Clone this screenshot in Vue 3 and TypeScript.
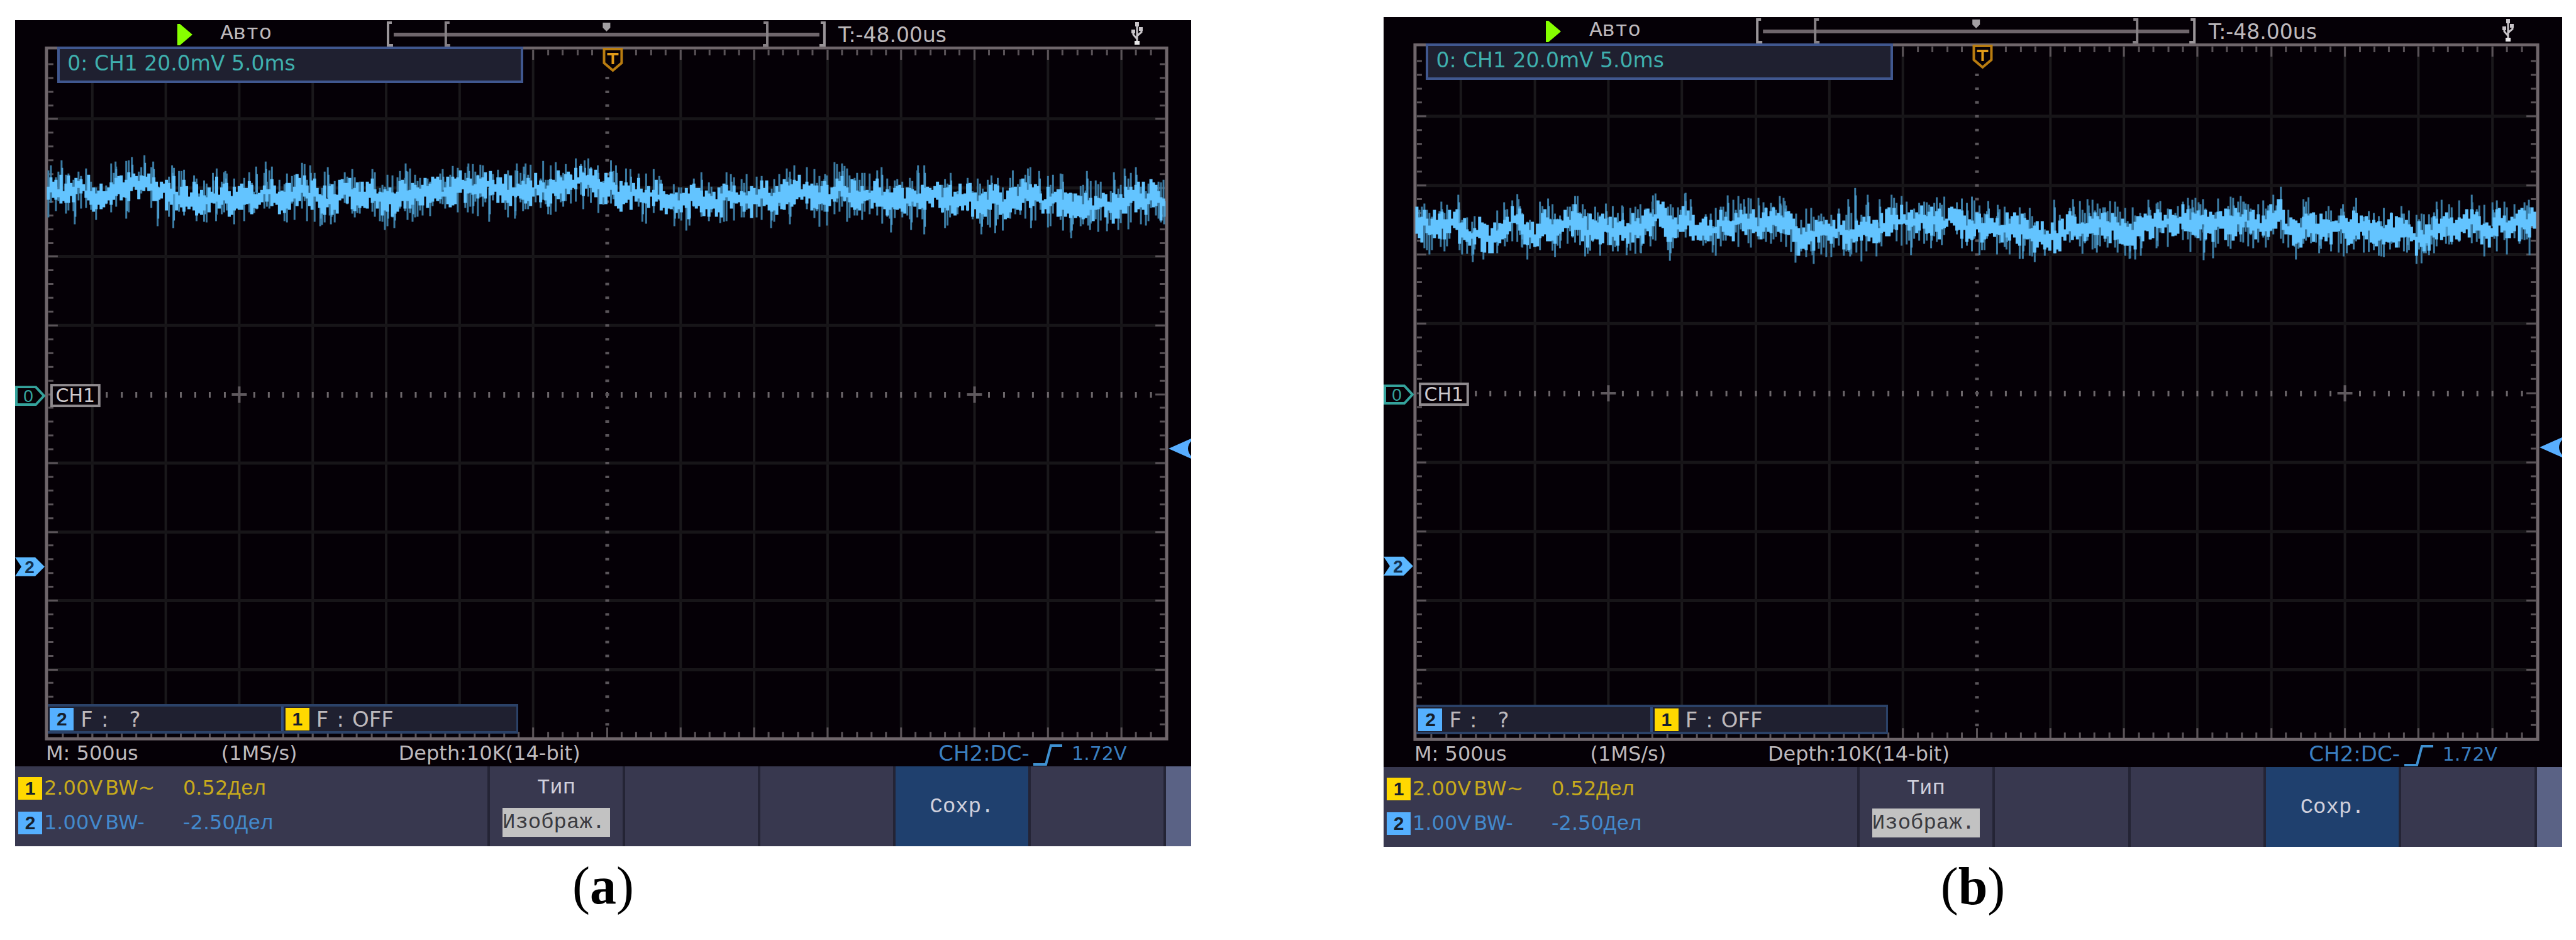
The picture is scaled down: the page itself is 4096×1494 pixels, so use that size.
<script setup lang="ts">
interface Segment {
  origin: number
  density: number
  mean: [number, number][]
  spikes: [number, number][]
}

interface Panel {
  id: string
  w: number
  h: number
  top: number
  trigger: number
  seed: number
  segments: Segment[]
}

const panels: Panel[] = [
  {
    id: 'a', w: 1873, h: 1105, top: 74, trigger: 640, seed: 11,
    segments: [
      {
        origin: -24, density: 1.568,
        mean: [[120, 930], [190, 900], [260, 915], [320, 895], [380, 885], [430, 910], [480, 935], [540, 950], [600, 945], [660, 905], [720, 940], [775, 920], [820, 945], [860, 900], [920, 920], [980, 950], [1040, 940], [1090, 910], [1150, 900], [1210, 895], [1290, 905], [1350, 895], [1420, 885], [1500, 895]],
        spikes: [[154, 765], [289, 772], [330, 750], [360, 740], [382, 770], [430, 790], [532, 825], [563, 815], [640, 795], [664, 772], [775, 788], [818, 798], [1013, 780], [1105, 808], [1170, 780], [1290, 780], [1308, 795], [1460, 765], [187, 1072], [315, 1045], [393, 1080], [433, 1090], [510, 1060], [540, 1055], [800, 1080], [826, 1072], [967, 1080], [984, 1090], [1030, 1060], [1180, 1020], [1222, 1060], [1285, 1045]]
      },
      {
        origin: 876, density: 1.537,
        mean: [[90, 895], [160, 930], [220, 950], [270, 980], [330, 945], [400, 940], [450, 945], [500, 965], [550, 925], [620, 940], [680, 920], [740, 935], [790, 950], [860, 950], [930, 960], [1000, 980], [1060, 960], [1130, 920], [1190, 950], [1240, 975], [1330, 985], [1380, 925], [1430, 940], [1470, 960]],
        spikes: [[80, 790], [124, 790], [160, 808], [231, 840], [333, 822], [406, 830], [551, 820], [636, 830], [678, 780], [774, 798], [864, 790], [879, 790], [944, 825], [1044, 838], [1133, 805], [1161, 815], [1218, 832], [1278, 815], [1344, 822], [1369, 805], [1397, 798], [189, 1058], [268, 1080], [304, 1078], [380, 1065], [504, 1090], [551, 1072], [797, 1110], [847, 1098], [879, 1118], [1019, 1118], [1053, 1112], [1140, 1090], [1239, 1137], [1285, 1098], [1326, 1103], [1467, 1070]]
      }
    ]
  },
  {
    id: 'b', w: 1877, h: 1111, top: 69, trigger: 643, seed: 29,
    segments: [
      {
        origin: -24, density: 1.568,
        mean: [[120, 1070], [170, 1055], [215, 1050], [250, 1100], [290, 1125], [340, 1080], [375, 1050], [400, 1105], [440, 1060], [490, 1080], [530, 1100], [580, 1080], [600, 1060], [640, 1090], [680, 1080], [720, 1050], [760, 1085], [795, 1060], [840, 1090], [895, 1065], [935, 1045], [980, 1090], [1030, 1065], [1070, 1125], [1110, 1115], [1150, 1085], [1200, 1115], [1250, 1105], [1290, 1070], [1340, 1070], [1400, 1080], [1450, 1070], [1490, 1065]],
        spikes: [[182, 962], [225, 930], [338, 965], [375, 950], [448, 948], [592, 972], [634, 980], [708, 962], [790, 925], [805, 952], [897, 932], [937, 952], [973, 945], [1027, 937], [1040, 960], [1198, 950], [1215, 898], [1247, 930], [1277, 950], [1427, 970], [1495, 970], [180, 1180], [261, 1250], [287, 1240], [322, 1210], [382, 1180], [478, 1185], [579, 1195], [645, 1218], [680, 1210], [752, 1245], [860, 1205], [1066, 1255], [1109, 1218], [1202, 1225], [1354, 1218], [1405, 1185]]
      },
      {
        origin: 896, density: 1.563,
        mean: [[50, 1080], [80, 1095], [125, 1065], [150, 1090], [190, 1105], [230, 1120], [290, 1110], [340, 1085], [400, 1100], [440, 1110], [485, 1065], [540, 1085], [575, 1065], [620, 1060], [660, 1110], [700, 1075], [745, 1055], [780, 1075], [830, 1035], [870, 1100], [900, 1065], [940, 1100], [990, 1085], [1030, 1075], [1060, 1105], [1130, 1090], [1190, 1130], [1220, 1060], [1260, 1095], [1310, 1055], [1360, 1080], [1410, 1070], [1470, 1070]],
        spikes: [[105, 960], [128, 978], [269, 955], [315, 950], [355, 980], [390, 990], [504, 955], [523, 972], [602, 945], [612, 955], [628, 965], [714, 945], [741, 962], [822, 980], [890, 950], [988, 975], [1133, 985], [1220, 962], [1310, 965], [1360, 965], [1450, 955], [150, 1190], [190, 1235], [270, 1210], [375, 1205], [457, 1235], [485, 1220], [523, 1185], [641, 1242], [867, 1180], [929, 1210], [997, 1210], [1105, 1190], [1147, 1205], [1194, 1210], [1244, 1165]]
      }
    ]
  }
]

const FRAME_LEFT = 50
const frameRight = (p: Panel) => p.w - 39

function random(seed: number) {
  let s = seed
  return () => {
    s = (s * 1664525 + 1013904223) % 4294967296
    return s / 4294967296
  }
}

// Noise trace: a dense bright core with fainter peaks around a slowly drifting mean.
function trace(p: Panel) {
  const r = random(p.seed)
  const mean: [number, number][] = []
  const spikes: [number, number][] = []
  for (const s of p.segments) {
    mean.push(...s.mean.map(([x, y]) => [x / s.density + s.origin, y / 3 - p.top] as [number, number]))
    spikes.push(...s.spikes.map(([x, y]) => [x / s.density + s.origin, y / 3 - p.top] as [number, number]))
  }
  const at = (x: number) => {
    let i = 1
    while (i < mean.length - 1 && mean[i][0] < x) i++
    const [x0, y0] = mean[i - 1]
    const [x1, y1] = mean[i]
    const t = Math.min(1, Math.max(0, (x - x0) / (x1 - x0)))
    return y0 + (y1 - y0) * t
  }
  let core = ''
  let peaks = ''
  let wobble = 0
  for (let x = FRAME_LEFT + 3; x < frameRight(p) - 2; x += 4) {
    wobble = wobble * 0.75 + (r() - 0.5) * 13
    const m = at(x) + wobble
    core += `M${x} ${(m - 3 - r() * 23).toFixed(0)}V${(m + 3 + r() * 23).toFixed(0)}`
    if (r() < 0.6) {
      const up = 14 + r() * 30
      const down = 14 + r() * 30
      peaks += `M${x} ${(m - up).toFixed(0)}V${(m + down).toFixed(0)}`
    }
  }
  let tall = ''
  for (const [x, y] of spikes) {
    const m = at(x)
    const dir = y < m ? -1 : 1
    peaks += `M${x.toFixed(0)} ${y.toFixed(0)}V${m.toFixed(0)}`
    tall += `M${(x + 1).toFixed(0)} ${(y - dir * 12).toFixed(0)}V${m.toFixed(0)}`
  }
  return { core, peaks, tall }
}

function graticule(p: Panel) {
  const cx = p.w / 2 + 6
  const cy = p.h / 2 + 1
  const dx = p.w / 16
  const dy = p.h / 10.09
  const l = FRAME_LEFT
  const rt = frameRight(p)
  const b = p.h
  let vertical = ''
  let horizontal = ''
  let ticks = ''
  let columnDots = ''
  let rowDots = ''
  for (let i = -38; i <= 38; i++) {
    const x = Math.round(cx + (i * dx) / 5)
    if (x < l + 4 || x > rt - 4) continue
    const major = i % 5 === 0
    const len = major ? 16 : 9
    ticks += `M${x} 5v${len}M${x} ${b - 5}v${-len}`
    if (major && i !== 0) vertical += `M${x} 5V${b - 5}`
    rowDots += `M${x} ${Math.round(cy) - 4}v9`
  }
  for (let i = -24; i <= 24; i++) {
    const y = Math.round(cy + (i * dy) / 5)
    const major = i % 5 === 0
    const len = major ? 15 : 8
    ticks += `M${l + 3} ${y}h${len}M${rt - 3} ${y}h${-len}`
    if (major && i !== 0) horizontal += `M${l} ${y}H${rt}`
    columnDots += `M${Math.round(cx) - 3} ${y}h6`
  }
  let crosses = ''
  for (const k of [-5, 5]) {
    const x = Math.round(cx + k * dx)
    crosses += `M${x - 12} ${Math.round(cy)}h24M${x} ${Math.round(cy) - 13}v26`
  }
  return { vertical, horizontal, ticks, rowDots, columnDots, crosses, cx: Math.round(cx), cy: Math.round(cy), dy }
}

const views = panels.map((p) => {
  const g = graticule(p)
  return { ...p, g, t: trace(p), zero: g.cy + 2, two: Math.round(g.cy + 2.5 * g.dy) }
})

const channels = [
  { n: '1', name: 'one', scale: '2.00V', coupling: 'BW~', offset: '0.52' },
  { n: '2', name: 'two', scale: '1.00V', coupling: 'BW-', offset: '-2.50' }
]
</script>

<template>
  <main class="page">
    <figure v-for="v in views" :key="v.id" class="figure">
      <section class="screen">
        <header class="topbar">
          <svg class="play" viewBox="0 0 24 34"><path d="M0 0h4l20 17L4 34H0z" fill="#86ff00" /></svg>
          <span class="cell-text mode">Авто</span>
          <svg class="position" viewBox="0 0 701 42">
            <path d="M12 23H690" stroke="#6f666c" stroke-width="6" />
            <g fill="none" stroke="#9a9599" stroke-width="4">
              <path d="M9 4H3V40H11M692 4H698V40H690" />
              <path d="M101 4H95V40H102M601 4H607V40H600" stroke="#868085" />
            </g>
            <path d="M345 4h12v8l-6 6-6-6z" fill="#a39fa3" />
          </svg>
          <span class="offset">T:-48.00us</span>
          <svg class="usb" viewBox="0 0 20 36" fill="none" stroke="#c8c4c8" stroke-width="3">
            <path d="M10 2V32M10 27L4 20V14M10 22L17 16V10" />
            <path d="M7 0h6v7H7zM1 12h6v6H1zM13 8h6v6h-6z" fill="#c8c4c8" stroke="none" />
            <path d="M6 30h8v6H6z" fill="#e8e6e8" stroke="none" />
          </svg>
        </header>

        <div class="plot">
          <svg class="graph" :viewBox="`0 0 ${v.w} ${v.h}`">
            <path :d="v.g.vertical" stroke="#1a181b" stroke-width="4" />
            <path :d="v.g.horizontal" stroke="#171518" stroke-width="5" />
            <path :d="v.g.ticks" stroke="#5a5358" stroke-width="3" />
            <path :d="v.g.rowDots" stroke="#6d676b" stroke-width="3" />
            <path :d="v.g.columnDots" stroke="#5a555a" stroke-width="4" />
            <path :d="v.g.crosses" stroke="#5f595e" stroke-width="4" />
            <rect x="50" y="2" :width="v.w - 89" :height="v.h - 5" fill="none" stroke="#6f666b" stroke-width="5" />
            <path :d="v.t.peaks" stroke="#3b7ba3" stroke-width="3" />
            <path :d="v.t.tall" stroke="#4b9acb" stroke-width="3" />
            <path :d="v.t.core" stroke="#63c4ff" stroke-width="5" />

            <g :transform="`translate(${v.g.cx + 9} 2)`">
              <path d="M-14 2H14V24L0 36L-14 24z" fill="#060006" stroke="#b97c10" stroke-width="4" />
              <path d="M-9 10H9M0 10V26" stroke="#e09a18" stroke-width="4" />
            </g>

            <g :transform="`translate(0 ${v.zero})`">
              <path d="M2 -14H33L46 0L33 14H2z" fill="#060006" stroke="#35a39c" stroke-width="4" />
              <text class="glyph" x="21" y="10" fill="#35a39c">0</text>
            </g>
            <g :transform="`translate(0 ${v.two})`">
              <path d="M0 -15H32L47 0L32 15H0L10 0z" fill="#5cb8ff" />
              <text class="glyph bold" x="23" y="10" fill="#12304e">2</text>
            </g>
            <g :transform="`translate(${v.w - 36} ${v.trigger})`">
              <path d="M0 0L36 -16V-12Q26 0 36 12V16z" fill="#58aeff" />
            </g>
            <g :transform="`translate(56 ${v.zero})`">
              <rect x="2" y="-17" width="76" height="33" fill="#060006" stroke="#8f8a8e" stroke-width="4" />
              <text class="tag" x="40" y="10">CH1</text>
            </g>
          </svg>

          <div class="readout">0: CH1 20.0mV 5.0ms</div>
          <div class="counters">
            <div class="counter">
              <b class="badge two">2</b><span>F</span><span>:</span><span class="unknown">?</span>
            </div>
            <div class="counter">
              <b class="badge one">1</b><span>F</span><span>:</span><span>OFF</span>
            </div>
          </div>
        </div>

        <div class="status">
          <span>M: 500us</span>
          <span>(1MS/s)</span>
          <span>Depth:10K(14-bit)</span>
          <span class="source">CH2:DC-</span>
          <svg class="edge" viewBox="0 0 46 34" fill="none" stroke="#3f90d0" stroke-width="4">
            <path d="M0 32H20L28 2H46" />
          </svg>
          <span class="level">1.72V</span>
        </div>

        <footer class="menu">
          <div class="channels">
            <div v-for="c in channels" :key="c.n" class="channel" :class="'ch-' + c.name">
              <b class="badge" :class="c.name">{{ c.n }}</b>
              <span class="scale"><span>{{ c.scale }}</span><span>{{ c.coupling }}</span></span>
              <span>{{ c.offset }}<span class="cell-text">Дел</span></span>
            </div>
          </div>
          <button class="key type" type="button">
            <span class="cell-text">Тип</span>
            <span class="cell-text value">Изображ.</span>
          </button>
          <button class="key" type="button" aria-label="F2"></button>
          <button class="key" type="button" aria-label="F3"></button>
          <button class="key save" type="button"><span class="cell-text">Сохр.</span></button>
          <button class="key" type="button" aria-label="F5"></button>
          <div class="edge-strip"></div>
        </footer>
      </section>
      <figcaption>(<b>{{ v.id }}</b>)</figcaption>
    </figure>
  </main>
</template>

<style>
body {
  background: #fff;
}
</style>

<style scoped>
.page {
  display: grid;
  grid-template-columns: minmax(0, 1870fr) minmax(0, 1874fr);
  column-gap: 306px;
  align-items: start;
  padding: 27px 22px 0 24px;
}
.figure {
  margin: 0;
}
.figure:first-child {
  margin-top: 5px;
}
.screen {
  background: #050006;
  color: #bdb9bc;
  font-family: "DejaVu Sans", Verdana, sans-serif;
  font-size: 32px;
  white-space: nowrap;
}
svg {
  display: block;
}
.cell-text {
  font-family: "Liberation Mono", "Courier New", monospace;
  font-size: 34px;
}
.topbar {
  display: grid;
  grid-template-columns:
    minmax(0, 258fr) minmax(0, 69fr) minmax(0, 264fr) minmax(0, 701fr)
    minmax(0, 19fr) minmax(0, 466fr) minmax(0, 20fr) minmax(0, 76fr);
  height: 42px;
  line-height: 42px;
}
.play {
  grid-column: 2;
  width: 24px;
  height: 34px;
  margin-top: 6px;
}
.mode {
  grid-column: 3;
}
.position {
  grid-column: 4;
  width: 100%;
  height: 42px;
}
.offset {
  grid-column: 6;
  font-size: 33px;
  line-height: 48px;
}
.usb {
  grid-column: 7;
  width: 20px;
  height: 36px;
  margin-top: 3px;
}
.plot {
  position: relative;
}
.graph {
  width: 100%;
  height: auto;
}
.glyph {
  font: 28px "Liberation Sans", Arial, sans-serif;
  text-anchor: middle;
}
.bold {
  font-weight: 700;
}
.tag {
  font-size: 30px;
  fill: #cdc9cc;
  text-anchor: middle;
}
.readout {
  position: absolute;
  top: 0;
  left: 3.6%;
  width: 39.6%;
  box-sizing: border-box;
  padding: 0 0 4px 12px;
  border: 4px solid #40578f;
  background: #1f2030;
  color: #3fb0ae;
  font-size: 33px;
  line-height: 46px;
}
.counters {
  position: absolute;
  bottom: 11px;
  left: 2.8%;
  width: 40%;
  display: flex;
  box-sizing: border-box;
  border: solid #2b4268;
  border-width: 4px 3px 4px 0;
  background: #1f2030;
}
.counter {
  flex: 1;
  display: flex;
  align-items: center;
  gap: 13px;
  padding-left: 3px;
  height: 39px;
  font-size: 34px;
}
.counter + .counter {
  border-left: 4px solid #2f4d80;
}
.unknown {
  margin-left: 20px;
}
.badge {
  width: 38px;
  flex: none;
  font: bold 30px/36px "Liberation Sans", Arial, sans-serif;
  text-align: center;
  color: #16202c;
}
.counter .badge {
  margin-right: -2px;
}
.one {
  background: #ffd800;
}
.two {
  background: #55b0ff;
}
.status {
  display: grid;
  grid-template-columns:
    minmax(0, 279fr) minmax(0, 282fr) minmax(0, 859fr) minmax(0, 151fr) minmax(0, 61fr) minmax(0, 190fr);
  padding-left: 49px;
  height: 41px;
  line-height: 41px;
}
.source {
  color: #3a7fc0;
  font-size: 34px;
}
.level {
  color: #3a7fc0;
  font-size: 30px;
}
.edge {
  width: 46px;
  height: 34px;
  margin-top: 6px;
}
.menu {
  display: grid;
  grid-template-columns: minmax(0, 751fr) repeat(5, minmax(0, 215fr)) minmax(0, 44fr);
  height: 127px;
  background: #38384f;
}
.channels {
  display: flex;
  flex-direction: column;
  gap: 18px;
  padding: 16px 0 0 5px;
}
.channel {
  display: grid;
  grid-template-columns: 41px 221px auto;
  align-items: center;
  line-height: 37px;
}
.channel .cell-text {
  line-height: 30px;
}
.scale {
  display: flex;
  gap: 4px;
}
.ch-one {
  color: #c7aa1c;
}
.ch-two {
  color: #4389cc;
}
.key {
  appearance: none;
  border: 0;
  border-left: 4px solid #242435;
  border-radius: 0;
  margin: 0;
  padding: 0;
  background: #38384f;
  color: #d0d0dc;
  display: flex;
  flex-direction: column;
  align-items: center;
  white-space: nowrap;
}
.type {
  padding-top: 16px;
  gap: 14px;
}
.type .cell-text {
  line-height: 36px;
}
.type .value {
  width: 171px;
  overflow: hidden;
  background: #c2c2c2;
  color: #3a3a40;
  line-height: 46px;
  text-align: left;
}
.save {
  background: #1f406e;
  justify-content: center;
}
.edge-strip {
  background: #5a6285;
  border-left: 4px solid #242435;
}
figcaption {
  margin-top: 15px;
  text-align: center;
  color: #000;
  font: 84px/96px "Liberation Serif", "Times New Roman", serif;
}
</style>
